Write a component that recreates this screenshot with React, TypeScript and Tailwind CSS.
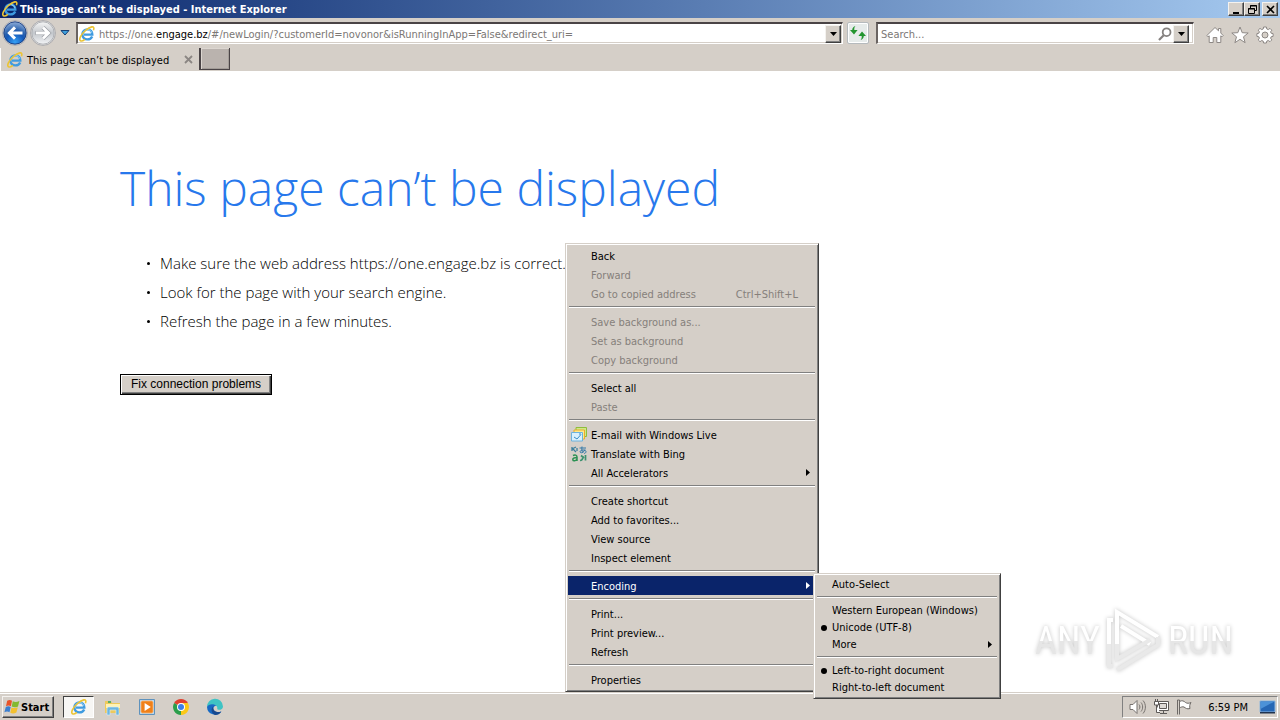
import React from 'react';

const uiFont = "font-['Tahoma','DejaVu_Sans_Condensed','DejaVu_Sans',sans-serif]";

const raised =
  'border border-t-[#f4f2ef] border-l-[#f4f2ef] border-r-[#404040] border-b-[#404040] shadow-[inset_-1px_-1px_#808080]';

function IeIcon({ className = 'size-4' }: { className?: string }) {
  return (
    <svg viewBox="0 0 16 16" className={`${className} shrink-0`} fill="none" aria-hidden="true">
      <path
        d="M13.2 10.4 C12.3 12.4 10.5 13.4 8.4 13.4 C5.6 13.4 3.4 11.4 3.4 8.5 C3.4 5.6 5.6 3.4 8.4 3.4 C11.4 3.4 13.3 5.6 13.3 8.6 L5 8.6"
        stroke="#3f9be0"
        strokeWidth="2.4"
      />
      <path d="M4.4 6.9 C5.2 4.9 6.6 3.6 8.6 3.6 C10.6 3.6 12.1 4.8 12.8 6.7" stroke="#a4dcfb" strokeWidth="1" />
      <path
        d="M14.4 4.2 C15.4 1.8 14.6 .5 12.8 .9 C9.2 1.7 3.4 6.4 1.4 10.8 C.2 13.6 .8 15.4 2.8 15 C3.8 14.8 4.8 14.3 5.8 13.4"
        stroke="#ecc434"
        strokeWidth="1.6"
      />
    </svg>
  );
}

function NavButton({ label, back = false }: { label: string; back?: boolean }) {
  return (
    <button type="button" aria-label={label} className="shrink-0">
      <svg viewBox="0 0 26 26" className="size-[26px]">
        <defs>
          <radialGradient id="back-fill" cx="50%" cy="90%" r="90%">
            <stop offset="0" stopColor="#35a0f5" />
            <stop offset="0.45" stopColor="#1558b8" />
            <stop offset="0.6" stopColor="#2a62ae" />
            <stop offset="1" stopColor="#8fadd8" />
          </radialGradient>
          <linearGradient id="forward-fill" x1="0" y1="0" x2="0" y2="1">
            <stop offset="0" stopColor="#f6f6f6" />
            <stop offset="0.5" stopColor="#c3c7cc" />
            <stop offset="1" stopColor="#f3f4f6" />
          </linearGradient>
        </defs>
        <circle cx="13" cy="13" r="12.4" fill="#eceae8" stroke="#8f9198" strokeWidth=".7" />
        <circle
          cx="13"
          cy="13"
          r="11.2"
          fill={back ? 'url(#back-fill)' : 'url(#forward-fill)'}
          stroke={back ? '#16397c' : '#a9abb0'}
          strokeWidth=".9"
        />
        <path
          d={back ? 'M20.5 13 H8 M13 7.4 L7.4 13 L13 18.6' : 'M5.5 13 H18 M13 7.4 L18.6 13 L13 18.6'}
          fill="none"
          stroke={back ? '#fff' : '#9b9ea4'}
          strokeWidth={back ? 3 : 4.2}
        />
        {!back && (
          <path d="M6 13 H18 M13 7.4 L18.6 13 L13 18.6" fill="none" stroke="#fff" strokeWidth="2.8" />
        )}
      </svg>
    </button>
  );
}

function DropButton({ label }: { label: string }) {
  return (
    <button
      type="button"
      aria-label={label}
      className={`flex h-[18px] w-4 shrink-0 items-center justify-center bg-[#d5cfc8] ${raised}`}
    >
      <svg viewBox="0 0 7 4" className="h-1 w-[7px]">
        <path d="M0 0 H7 L3.5 4 Z" fill="#000" />
      </svg>
    </button>
  );
}

function TitleBar() {
  const button = `flex h-[14px] items-center justify-center bg-[#d5cfc8] ${raised}`;
  return (
    <header className="flex h-[18px] items-center bg-linear-to-r from-[#0a246a] to-[#a6caf0] pr-[2px] pl-[2px]">
      <IeIcon />
      <h1 className="ml-[2px] flex-1 pt-px text-[11px] leading-[17px] font-bold text-white">
        This page can’t be displayed - Internet Explorer
      </h1>
      <button type="button" aria-label="Minimize" className={`${button} w-4`}>
        <svg viewBox="0 0 9 9" className="size-[9px]">
          <path d="M1 7 H7 V9 H1 Z" />
        </svg>
      </button>
      <button type="button" aria-label="Restore" className={`${button} w-4`}>
        <svg viewBox="0 0 9 9" className="size-[9px]" fill="none" stroke="#000">
          <path d="M2.5 3.5 V.5 H8.5 V5.5 H6.5 M2 1 H9 M.5 3.5 H6.5 V8.5 H.5 Z M0 4 H7" />
        </svg>
      </button>
      <button type="button" aria-label="Close" className={`${button} ml-[2px] w-4`}>
        <svg viewBox="0 0 9 9" className="size-[9px]" stroke="#000" strokeWidth="1.6">
          <path d="M1 1 L8 8 M8 1 L1 8" />
        </svg>
      </button>
    </header>
  );
}

function NavBar() {
  const field =
    'flex h-[22px] items-center border-t-2 border-l-2 border-r border-b border-t-[#4a4446] border-l-[#6a6462] border-r-white border-b-white bg-white shadow-[inset_-1px_-1px_#d5cfc8]';
  return (
    <div className="flex h-[30px] items-center pr-[6px] pl-[2px]">
      <NavButton label="Back" back />
      <div className="ml-[2px] flex">
        <NavButton label="Forward" />
      </div>
      <button type="button" aria-label="Recent pages" className="ml-[3px] flex w-[12px] justify-center">
        <svg viewBox="0 0 10 6" className="h-[6px] w-[10px]">
          <path d="M1 .5 H9 L5 5 Z" fill="#3fa0dc" stroke="#173f74" />
        </svg>
      </button>
      <div className={`${field} ml-[5px] min-w-0 flex-1 pr-px pl-px`}>
        <IeIcon />
        <div className="ml-[4px] flex-1 truncate pt-[3px] text-[11px] text-[#7b7775]">
          https://one.<span className="text-black">engage.bz</span>
          /#/newLogin/?customerId=novonor&amp;isRunningInApp=False&amp;redirect_uri=
        </div>
        <DropButton label="Show address bar autocomplete" />
      </div>
      <button
        type="button"
        aria-label="Refresh"
        className="mr-[5px] ml-[4px] flex size-[22px] shrink-0 items-center justify-center rounded-xs border border-[#b5babd] bg-[#e6ebea] shadow-[inset_0_0_0_1px_#fff]"
      >
        <svg viewBox="0 0 16 14" className="h-[14px] w-4" fill="#23952f">
          <path d="M5.5 0 C4.4 1 4.2 2.4 4.3 4 H7.6 L4 8.4 L0 4 H2.2 C2.4 2 3.4 .6 5.5 0 Z" />
          <path d="M10.5 14 C11.6 13 11.8 11.6 11.7 10 H8.4 L12 5.6 L16 10 H13.8 C13.6 12 12.6 13.4 10.5 14 Z" />
        </svg>
      </button>
      <div className={`${field} ml-[2px] w-1/4 shrink-0 pr-[4px] pl-[3px]`}>
        <input
          aria-label="Search"
          placeholder="Search..."
          className="min-w-0 flex-1 pt-[3px] text-[11px] outline-none placeholder:text-[#7b7775]"
        />
        <svg viewBox="0 0 14 14" className="mr-px size-[14px] shrink-0" fill="none" stroke="#85817f" strokeWidth="1.8">
          <circle cx="8.6" cy="5.2" r="3.9" />
          <path d="M5.7 8.2 L1 13" strokeWidth="2.2" />
        </svg>
        <DropButton label="Search options" />
      </div>
      <div className="ml-[12px] flex shrink-0 gap-[7px] pt-[3px]">
        <button type="button" aria-label="Home">
          <svg viewBox="0 0 18 18" className="size-[18px]" fill="#fff" stroke="#8d8885" strokeWidth="1">
            <path d="M9 1.5 L12.5 4.8 V2.5 H14.8 V7 L17.2 9.6 L16 10.8 L14.8 9.8 V16.5 H10.8 V11.5 H7.2 V16.5 H3.2 V9.8 L2 10.8 L.8 9.6 Z" />
          </svg>
        </button>
        <button type="button" aria-label="Favorites">
          <svg viewBox="0 0 18 18" className="size-[18px]" fill="#fff" stroke="#8d8885" strokeWidth="1">
            <path d="M9 1 L11.2 6.7 L17.2 7 L12.5 10.8 L14.1 16.7 L9 13.3 L3.9 16.7 L5.5 10.8 L.8 7 L6.8 6.7 Z" />
          </svg>
        </button>
        <button type="button" aria-label="Tools">
          <svg viewBox="0 0 18 18" className="size-[18px]" fill="#fff" stroke="#8d8885" strokeWidth="1">
            <path d="M7.6 1 H10.4 L10.8 3 L12.3 3.6 L14 2.4 L15.8 4.2 L14.6 5.8 L15.1 7.2 L17.1 7.6 V10.4 L15.1 10.8 L14.6 12.2 L15.8 13.9 L14 15.7 L12.3 14.5 L10.8 15.1 L10.4 17 H7.6 L7.2 15.1 L5.7 14.5 L4 15.7 L2.2 13.9 L3.4 12.2 L2.9 10.8 L.9 10.4 V7.6 L2.9 7.2 L3.4 5.8 L2.2 4.2 L4 2.4 L5.7 3.6 L7.2 3 Z" />
            <circle cx="9" cy="9" r="3" fill="#d5cfc8" />
          </svg>
        </button>
      </div>
    </div>
  );
}

function TabRow() {
  return (
    <div className="flex h-[23px] items-stretch">
      <div className="flex w-[198px] items-center border-l border-l-white pr-[5px] pl-[6px]">
        <IeIcon />
        <span className="ml-[4px] flex-1 pt-[3px] text-[11px]">This page can’t be displayed</span>
        <button type="button" aria-label="Close tab">
          <svg viewBox="0 0 9 9" className="size-[9px]" stroke="#8b8683" strokeWidth="1.8">
            <path d="M1 1 L8 8 M8 1 L1 8" />
          </svg>
        </button>
      </div>
      <button
        type="button"
        aria-label="New tab"
        className="ml-px h-[22px] w-[31px] border-r border-b border-l-2 border-[#4a4446] bg-[#bab3ae] shadow-[inset_1px_1px_#dcd6d0,inset_-1px_-1px_#a29c97]"
      />
    </div>
  );
}

function ErrorPage() {
  return (
    <main className="flex-1 bg-white px-[120px] pt-[81px]">
      <h2 className="font-['Segoe_UI','Open_Sans',sans-serif] text-[48px] leading-[72px] font-light text-[#2778ec]">
        This page can’t be displayed
      </h2>
      <ul className="mt-[25px] pl-[27px] font-['Segoe_UI','Open_Sans',sans-serif] text-[15px] leading-[29px] font-light text-black">
        {[
          'Make sure the web address https://one.engage.bz is correct.',
          'Look for the page with your search engine.',
          'Refresh the page in a few minutes.',
        ].map((tip) => (
          <li key={tip} className="flex items-center gap-[10px]">
            <span className="size-[3px] rounded-full bg-black" />
            {tip}
          </li>
        ))}
      </ul>
      <button
        type="button"
        className="mt-[38px] h-[21px] border border-black bg-[#d5cfc8] px-[10px] pb-px font-['Liberation_Sans',Arial,sans-serif] text-[12px] leading-[18px] shadow-[inset_1px_1px_#fff,inset_-1px_-1px_#404040,inset_-2px_-2px_#808080]"
      >
        Fix connection problems
      </button>
    </main>
  );
}

function MailIcon() {
  return (
    <svg viewBox="0 0 16 16" className="size-4">
      <path d="M5 .5 H15.5 V9.5 H5 Z" fill="#cfe88a" stroke="#8fbc3c" />
      <path d="M3 3 H13.5 V12 H3 Z" fill="#ffe98c" stroke="#e8ad2d" />
      <path d="M.5 5.5 H11.5 V14 H.5 Z" fill="#d9f0fc" stroke="#6cb2dc" />
      <path d="M3 10 L6 12 L10 7.5 M8 7 H10" fill="none" stroke="#3b8fc8" />
    </svg>
  );
}

function TranslateIcon() {
  return (
    <svg viewBox="0 0 16 16" className="size-4" fill="none">
      <path d="M1 1 V5 M1 3 L5 1 M2 3 L5 6 M6 2 V5" stroke="#3b7f9c" strokeWidth="1.3" />
      <path d="M8.5 2 H15 M11 .5 C10.5 4 11 5 12 7 M14 3.5 C12.5 7 9.5 7.5 9 5.8 C9 4 14.5 3 15 5.5 C15.2 6.6 14 7.4 13 7.5" stroke="#3279a8" />
      <path d="M2 9.5 C4 8.5 6 9 6 11 V15 M6 11.5 C3 11.5 1.5 12.4 1.8 13.8 C2.2 15.4 5 15 6 13" stroke="#2b9152" strokeWidth="1.5" />
      <path d="M9 14.5 C11 14.5 12 13.5 12 10 M14.5 9 V14.5 M10 9.5 L13 12" stroke="#3e9270" strokeWidth="1.7" />
    </svg>
  );
}

type Entry = {
  label: string;
  shortcut?: string;
  disabled?: boolean;
  submenu?: boolean;
  active?: boolean;
  checked?: boolean;
  icon?: React.ReactNode;
};

const pageMenu: Entry[][] = [
  [
    { label: 'Back' },
    { label: 'Forward', disabled: true },
    { label: 'Go to copied address', shortcut: 'Ctrl+Shift+L', disabled: true },
  ],
  [
    { label: 'Save background as...', disabled: true },
    { label: 'Set as background', disabled: true },
    { label: 'Copy background', disabled: true },
  ],
  [{ label: 'Select all' }, { label: 'Paste', disabled: true }],
  [
    { label: 'E-mail with Windows Live', icon: <MailIcon /> },
    { label: 'Translate with Bing', icon: <TranslateIcon /> },
    { label: 'All Accelerators', submenu: true },
  ],
  [
    { label: 'Create shortcut' },
    { label: 'Add to favorites...' },
    { label: 'View source' },
    { label: 'Inspect element' },
  ],
  [{ label: 'Encoding', submenu: true, active: true }],
  [{ label: 'Print...' }, { label: 'Print preview...' }, { label: 'Refresh' }],
  [{ label: 'Properties' }],
];

const encodingMenu: Entry[][] = [
  [{ label: 'Auto-Select' }],
  [
    { label: 'Western European (Windows)' },
    { label: 'Unicode (UTF-8)', checked: true },
    { label: 'More', submenu: true },
  ],
  [{ label: 'Left-to-right document', checked: true }, { label: 'Right-to-left document' }],
];

function Menu({
  label,
  groups,
  rowClass,
  textClass,
  gutterClass,
  className,
}: {
  label: string;
  groups: Entry[][];
  rowClass: string;
  textClass: string;
  gutterClass: string;
  className: string;
}) {
  return (
    <div
      role="menu"
      aria-label={label}
      className={`absolute border border-t-[#d5cfc8] border-l-[#d5cfc8] border-r-[#404040] border-b-[#404040] bg-[#d5cfc8] p-[2px] text-[11px] shadow-[inset_1px_1px_#fff,inset_-1px_-1px_#808080] ${className}`}
    >
      {groups.map((group, i) => (
        <React.Fragment key={group[0].label}>
          {i > 0 && (
            <div role="separator" className="mx-px mt-[3px] mb-[4px] h-[2px] border-t border-b border-t-[#808080] border-b-white" />
          )}
          {group.map((entry) => (
            <button
              key={entry.label}
              type="button"
              role="menuitem"
              disabled={entry.disabled}
              className={`flex w-full items-center text-left ${rowClass} ${entry.active ? 'bg-[#0a246a] text-white' : ''} ${entry.disabled ? 'text-[#85807b]' : ''}`}
            >
              <span className={`flex shrink-0 items-center justify-center pr-px ${gutterClass}`}>
                {entry.icon}
                {entry.checked && <span className="size-[6px] rounded-full bg-black" />}
              </span>
              <span className={`flex-1 ${textClass}`}>{entry.label}</span>
              {entry.shortcut && <span className={`mr-[18px] ${textClass}`}>{entry.shortcut}</span>}
              {entry.submenu && (
                <svg viewBox="0 0 4 7" className="mr-[6px] h-[7px] w-1" fill="currentColor">
                  <path d="M0 0 L4 3.5 L0 7 Z" />
                </svg>
              )}
            </button>
          ))}
        </React.Fragment>
      ))}
    </div>
  );
}

function Watermark() {
  const word =
    "bg-linear-to-b from-white from-50% to-[#e6e6e6] to-50% bg-clip-text font-['Roboto_Condensed','Liberation_Sans_Narrow',sans-serif] text-[38px] leading-[44px] text-transparent";
  return (
    <div className="pointer-events-none absolute right-[47px] bottom-[46px] flex items-center gap-[4px] drop-shadow-[0_0_2px_#c4c4c4]">
      <span className={word}>ANY</span>
      <svg viewBox="0 0 60 66" className="h-[66px] w-[60px]" fill="none" strokeWidth="4">
        <path d="M13 36 V4 L54 29" stroke="#fff" />
        <path d="M5 36 V12 H9 M17 18 L46 36" stroke="#fff" />
        <path d="M13 36 V51 L46 32 M5 36 V58 H9 M13 62 L54 37 V29" stroke="#e9e9e9" />
      </svg>
      <span className={word}>RUN</span>
    </div>
  );
}

function ExplorerIcon() {
  return (
    <svg viewBox="0 0 18 18" className="size-[18px]">
      <path d="M1 3 H7 L8 5 H16 V15 H1 Z" fill="#edc95c" />
      <path d="M2 6 H16 V10 H2 Z" fill="#fff2b4" />
      <path d="M4 3 H7 V5 H4 Z" fill="#5aae64" />
      <path d="M3 17 V11 C3 9.5 4 9 5 9 H13 C14 9 15 9.5 15 11 V17 H12 V12 H6 V17 Z" fill="#6cb6e0" stroke="#d6eefa" strokeWidth=".6" />
    </svg>
  );
}

function MediaIcon() {
  return (
    <svg viewBox="0 0 18 18" className="size-[18px]">
      <path d="M1.5 1.5 H16.5 V16.5 H1.5 Z" fill="#b9d6ee" stroke="#5e92bd" />
      <path d="M4 3 H14 L15 4 V14 L14 15 H4 L3 14 V4 Z" fill="#f08019" stroke="#f7b36c" strokeWidth=".8" />
      <path d="M6.6 5 L12.8 9 L6.6 13 Z" fill="#fff" />
    </svg>
  );
}

function ChromeIcon() {
  return (
    <svg viewBox="0 0 18 18" className="size-[18px]">
      <path d="M9 9 L2.1 5 A8 8 0 0 1 15.9 5 Z" fill="#e0402f" />
      <path d="M9 9 L15.9 5 A8 8 0 0 1 9 17 Z" fill="#fbc816" />
      <path d="M9 9 L9 17 A8 8 0 0 1 2.1 5 Z" fill="#2b9e4b" />
      <path d="M9 5 H15.9 L12.4 11 Z" fill="#fbc816" />
      <circle cx="9" cy="9" r="4" fill="#fff" />
      <circle cx="9" cy="9" r="3" fill="#3c7fe8" />
    </svg>
  );
}

function EdgeIcon() {
  return (
    <svg viewBox="0 0 18 18" className="size-[18px]">
      <path d="M1 9 A8 8 0 0 1 17 8.4 C17 11 14.8 12 12.6 11.8 C10.8 11.6 11.4 10.8 11.2 9.2 C10.6 6.4 5 5.6 1 9 Z" fill="#3fc3c4" />
      <path d="M1 9 C2.2 5.6 8.4 5.4 10.4 7.8 C8 7.8 7 9.6 7.4 11.6 C8 14.2 12 15 15.4 13.4 A8 8 0 0 1 1 9 Z" fill="#1769c4" />
      <path d="M9 17 C5.4 15.6 4.4 11 7.2 8.6 C6.6 13 11 15.4 15.4 13.4 A8 8 0 0 1 9 17 Z" fill="#17498f" />
    </svg>
  );
}

function WindowsFlag() {
  return (
    <svg viewBox="0 0 16 16" className="size-4 shrink-0">
      <path d="M3.2 1.8 C5 .6 6.6 .8 8 1.8 L6.9 7.2 C5.2 6.2 3.8 6.2 2 7.2 Z" fill="#e8542a" />
      <path d="M8.8 2.2 C10.6 3.2 12.8 3.2 15.4 2 L14 7.4 C11.8 8.6 9.6 8.4 7.7 7.6 Z" fill="#83b931" />
      <path d="M1.8 8 C3.6 7 5 7 6.7 8 L5.5 13.2 C4 12.2 2.2 12.2 .4 13.2 Z" fill="#3b7fd0" />
      <path d="M7.5 8.4 C9.2 9.2 11.4 9.4 13.8 8.2 L12.4 13.6 C10.2 14.8 8 14.8 6.3 13.8 Z" fill="#f3c02f" />
    </svg>
  );
}

function Taskbar() {
  const app = 'flex h-[22px] w-[31px] items-center justify-center';
  return (
    <footer className="flex h-[28px] items-center border-t border-[#d5cfc8] bg-[#d5cfc8] pr-[2px] pl-[2px] shadow-[inset_0_1px_#fff]">
      <button type="button" className={`flex h-[22px] w-[52px] items-center bg-[#d5cfc8] pl-px text-[11px] font-bold ${raised}`}>
        <WindowsFlag />
        <span className="ml-px pt-[3px]">Start</span>
      </button>
      <nav aria-label="Pinned programs" className="ml-[9px] flex gap-[3px]">
        <button
          type="button"
          aria-label="Internet Explorer"
          className={`${app} border border-t-[#404040] border-l-[#404040] border-r-white border-b-white bg-[#f7f6f4]`}
        >
          <IeIcon className="size-4" />
        </button>
        <button type="button" aria-label="Windows Explorer" className={app}>
          <ExplorerIcon />
        </button>
        <button type="button" aria-label="Media Player" className={app}>
          <MediaIcon />
        </button>
        <button type="button" aria-label="Chrome" className={app}>
          <ChromeIcon />
        </button>
        <button type="button" aria-label="Edge" className={app}>
          <EdgeIcon />
        </button>
      </nav>
      <div className="ml-auto flex h-[22px] items-center border border-t-[#808080] border-l-[#808080] border-r-white border-b-white pr-px pl-[6px]">
        <svg viewBox="0 0 18 16" className="h-4 w-[18px]" fill="none" stroke="#77726f">
          <path d="M1 5.5 H4 L8 1.5 V14.5 L4 10.5 H1 Z" fill="#fff" />
          <path d="M10 5.5 C11.2 7 11.2 9 10 10.5 M12 3.5 C14.2 6 14.2 10 12 12.5 M14 1.5 C17.2 5 17.2 11 14 14.5" />
        </svg>
        <svg viewBox="0 0 16 16" className="ml-[6px] size-4" fill="none" stroke="#5d5957">
          <path d="M4.5 2.5 H15.5 V11.5 H4.5 Z" fill="#fff" />
          <path d="M6.5 4.5 H13.5 V9.5 H6.5 Z" fill="#dedad6" />
          <path d="M7 14.5 H14 M10.5 12 V14" />
          <path d="M1.5 2.5 H5.5 V6 H1.5 Z M2.5 0 V2 M4.5 0 V2 M3.5 6 V13.5 H7" fill="#fff" />
        </svg>
        <svg viewBox="0 0 16 16" className="ml-[7px] size-4" fill="none" stroke="#6d6966">
          <path d="M1.5 1 V15.5 M3.5 1 V15.5 M1.5 1 H3.5" fill="#fff" />
          <path d="M3.5 2.5 C6 1 8 2 9.5 3.5 C11 4.5 13 4.5 15 3.5 C13.5 5.5 13.5 7.5 14 9.5 C11 10.5 9.5 9 8 8 C6.5 7.5 5 8 3.5 9 Z" fill="#fff" />
        </svg>
        <time className="ml-[16px] pt-[3px] text-[11px]">6:59 PM</time>
        <button type="button" aria-label="Show desktop" className="ml-[11px]">
          <svg viewBox="0 0 17 16" className="h-4 w-[17px]">
            <path d="M1 2 H16 V13 H1 Z" fill="#2667b5" stroke="#8fb6dc" />
            <path d="M1.5 2.5 H15.5 L1.5 10 Z" fill="#4c92d8" />
            <path d="M1 13 H16 V14.5 H1 Z" fill="#20334f" />
          </svg>
        </button>
      </div>
    </footer>
  );
}

export default function App() {
  return (
    <div className={`relative flex min-h-screen flex-col bg-[#d5cfc8] text-black ${uiFont}`}>
      <TitleBar />
      <NavBar />
      <TabRow />
      <ErrorPage />
      <Taskbar />
      <Watermark />
      <Menu
        label="Page"
        groups={pageMenu}
        rowClass="h-[19px]"
        textClass="pt-[3px]"
        gutterClass="w-[23px]"
        className="top-[243px] left-[565px] w-[254px]"
      />
      <Menu
        label="Encoding"
        groups={encodingMenu}
        rowClass="h-[17px]"
        textClass="pt-[2px]"
        gutterClass="w-4"
        className="top-[573px] left-[813px] w-[188px]"
      />
    </div>
  );
}
